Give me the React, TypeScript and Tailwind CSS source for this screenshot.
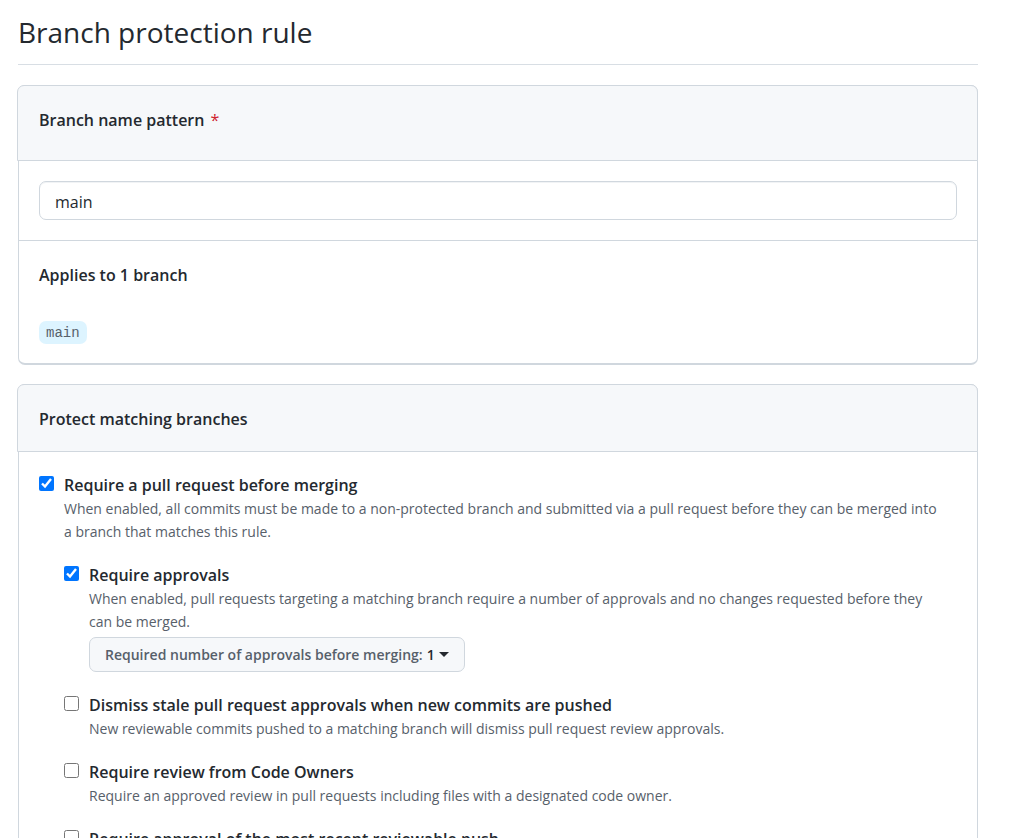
import { useState, type ReactNode } from "react";

type RuleProps = {
  id: string;
  title: string;
  note: string;
  defaultChecked?: boolean;
  children?: ReactNode;
};

function Rule({ id, title, note, defaultChecked = false, children }: RuleProps) {
  return (
    <div className="flex items-start gap-[10px]">
      <input
        id={id}
        type="checkbox"
        defaultChecked={defaultChecked}
        aria-describedby={`${id}-note`}
        className="mt-1 size-[15px] shrink-0 accent-[#0075ff]"
      />
      <div className="min-w-0 flex-1">
        <label htmlFor={id} className="block pt-px text-[16px] leading-6 font-semibold">
          {title}
        </label>
        <p id={`${id}-note`} className="pr-3 text-[14px] leading-[23px] text-[#57606a]">
          {note}
        </p>
        {children}
      </div>
    </div>
  );
}

function BoxHeader({ children }: { children: ReactNode }) {
  return (
    <div className="-mt-px -mr-px -ml-0.5 rounded-t-[7px] border border-[#d0d7de] bg-[#f6f8fa] pt-[21px] pr-5 pb-[19px] pl-[21px]">
      {children}
    </div>
  );
}

export default function App() {
  const [pattern, setPattern] = useState("main");

  return (
    <main className="min-h-screen bg-white pr-[31px] pl-[18px] font-['Open_Sans','Noto_Sans',sans-serif] text-[#24292f]">
      <h1 className="border-b border-[#d8dee4] pt-[10px] pb-[9px] text-[28px] leading-[45px]">
        Branch protection rule
      </h1>

      <section className="mt-5 rounded-[7px] border border-b-2 border-[#d0d7de]">
        <BoxHeader>
          <label htmlFor="pattern" className="block pb-2 text-[16px] leading-[26px] font-semibold">
            Branch name pattern <span className="ml-[2px] font-normal text-[#cf222e]">*</span>
          </label>
        </BoxHeader>
        <div className="border-b border-[#d0d7de] p-5">
          <input
            id="pattern"
            type="text"
            value={pattern}
            onChange={(e) => setPattern(e.target.value)}
            className="block h-[39px] w-full rounded-[7px] border border-[#d0d7de] bg-white px-[15px] pt-[2px] text-[16px] shadow-[inset_0_1px_0_rgba(208,215,222,0.3)] outline-none focus:border-[#0969da]"
          />
        </div>
        <div className="px-5 pt-[21px] pb-[19px]">
          <h2 className="text-[16px] leading-[26px] font-semibold">Applies to 1 branch</h2>
          <div className="flex pt-[33px]">
            <span className="rounded-[7px] bg-[#ddf4ff] px-[7px] pt-px font-['Liberation_Mono',monospace] text-[14px] leading-[22px] text-[#57606a]">
              main
            </span>
          </div>
        </div>
      </section>

      <section className="mt-[19px] rounded-[7px] border border-[#d0d7de]">
        <BoxHeader>
          <h2 className="text-[16px] leading-[26px] font-semibold">Protect matching branches</h2>
        </BoxHeader>
        <div className="p-5">
          <Rule
            id="require-pr"
            title="Require a pull request before merging"
            note="When enabled, all commits must be made to a non-protected branch and submitted via a pull request before they can be merged into a branch that matches this rule."
            defaultChecked
          >
            <div className="mt-[19px] flex flex-col gap-[19px]">
              <Rule
                id="require-approvals"
                title="Require approvals"
                note="When enabled, pull requests targeting a matching branch require a number of approvals and no changes requested before they can be merged."
                defaultChecked
              >
                <button
                  type="button"
                  aria-haspopup="menu"
                  className="mt-1 mb-px flex h-[35px] items-center rounded-[7px] border border-[#d0d7de] bg-[#f6f8fa] px-[15px] text-[14px] font-semibold"
                >
                  <span className="text-[#57606a]">Required number of approvals before merging:</span>
                  <span className="ml-1">1</span>
                  <svg viewBox="0 0 10 5" className="ml-1 h-[5px] w-[10px]" fill="currentColor" aria-hidden="true">
                    <path d="M0 0h10L5 5z" />
                  </svg>
                </button>
              </Rule>
              <Rule
                id="dismiss-stale"
                title="Dismiss stale pull request approvals when new commits are pushed"
                note="New reviewable commits pushed to a matching branch will dismiss pull request review approvals."
              />
              <Rule
                id="code-owners"
                title="Require review from Code Owners"
                note="Require an approved review in pull requests including files with a designated code owner."
              />
              <Rule
                id="recent-push"
                title="Require approval of the most recent reviewable push"
                note="Whether the most recent reviewable push must be approved by someone other than the person who pushed it."
              />
            </div>
          </Rule>
        </div>
      </section>
    </main>
  );
}
